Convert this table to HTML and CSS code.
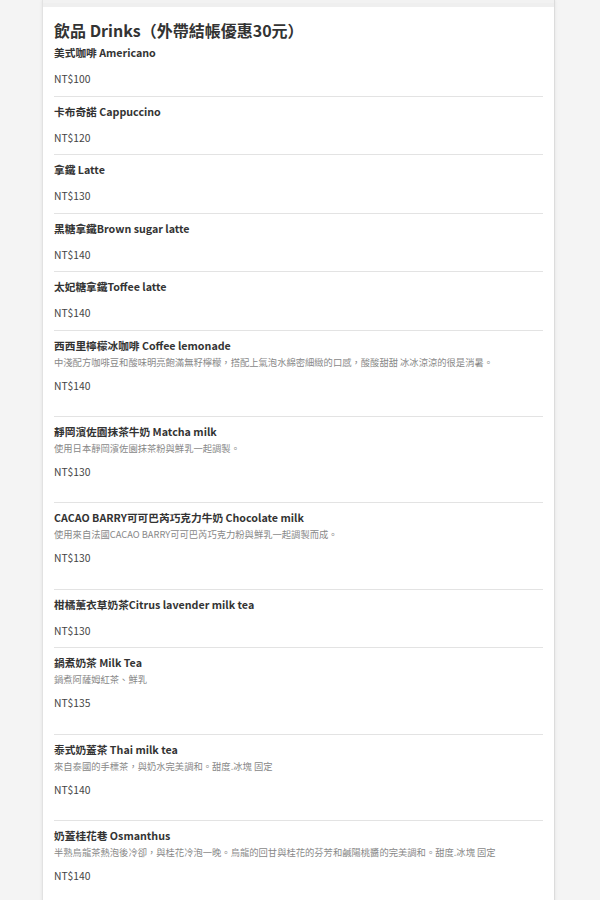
FILE: index.html
```html
<!DOCTYPE html>
<html lang="zh-Hant">
<head>
    <meta charset="UTF-8">
    <meta name="viewport" content="width=device-width, initial-scale=1.0">
    <title>飲品 Drinks</title>
    <link rel="stylesheet" href="styles.css">
</head>
<body>
    <div class="menu">
        <div class="menu-top"></div>
        <div class="section">
            <h2 class="section-title">飲品 Drinks（外帶結帳優惠30元）</h2>
            <div class="item">
                <div class="name">美式咖啡 Americano</div>
                <div class="price">NT$100</div>
            </div>
            <div class="item">
                <div class="name">卡布奇諾 Cappuccino</div>
                <div class="price">NT$120</div>
            </div>
            <div class="item">
                <div class="name">拿鐵 Latte</div>
                <div class="price">NT$130</div>
            </div>
            <div class="item">
                <div class="name">黑糖拿鐵Brown sugar latte</div>
                <div class="price">NT$140</div>
            </div>
            <div class="item">
                <div class="name">太妃糖拿鐵Toffee latte</div>
                <div class="price">NT$140</div>
            </div>
            <div class="item has-desc">
                <div class="name">西西里檸檬冰咖啡 Coffee lemonade</div>
                <div class="desc">中淺配方咖啡豆和酸味明亮飽滿無籽檸檬，搭配上氣泡水綿密細緻的口感，酸酸甜甜 冰冰涼涼的很是消暑。</div>
                <div class="price">NT$140</div>
            </div>
            <div class="item has-desc">
                <div class="name">靜岡濱佐園抹茶牛奶 Matcha milk</div>
                <div class="desc">使用日本靜岡濱佐園抹茶粉與鮮乳一起調製。</div>
                <div class="price">NT$130</div>
            </div>
            <div class="item has-desc">
                <div class="name">CACAO BARRY可可巴芮巧克力牛奶 Chocolate milk</div>
                <div class="desc">使用來自法國CACAO BARRY可可巴芮巧克力粉與鮮乳一起調製而成。</div>
                <div class="price">NT$130</div>
            </div>
            <div class="item">
                <div class="name">柑橘薰衣草奶茶Citrus lavender milk tea</div>
                <div class="price">NT$130</div>
            </div>
            <div class="item has-desc">
                <div class="name">鍋煮奶茶 Milk Tea</div>
                <div class="desc">鍋煮阿薩姆紅茶、鮮乳</div>
                <div class="price">NT$135</div>
            </div>
            <div class="item has-desc">
                <div class="name">泰式奶蓋茶 Thai milk tea</div>
                <div class="desc">來自泰國的手標茶，與奶水完美調和。甜度.冰塊 固定</div>
                <div class="price">NT$140</div>
            </div>
            <div class="item has-desc">
                <div class="name">奶蓋桂花巷 Osmanthus</div>
                <div class="desc">半熟烏龍茶熱泡後冷卻，與桂花冷泡一晚。烏龍的回甘與桂花的芬芳和鹹陽桃醬的完美調和。甜度.冰塊 固定</div>
                <div class="price">NT$140</div>
            </div>
        </div>
    </div>
</body>
</html>
```

FILE: styles.css
```css
body {
    font-family: "Noto Sans CJK TC", "Noto Sans", sans-serif;
    background-color: #f4f4f4;
    color: #333;
    margin: 0;
    overflow: hidden;
}
.menu {
    width: 511px;
    margin-left: 42px;
    background: #fff;
    border-left: 1px solid #e2e2e2;
    border-right: 1px solid #dcdcdc;
    box-shadow: 0 0 3px rgba(0, 0, 0, 0.08);
    min-height: 100vh;
}
.menu-top {
    height: 4px;
    border-top: 3px solid #f2f2f2;
    background: #efefef;
}
.section {
    padding: 12px 11px 0;
}
.section-title {
    font-size: 16px;
    font-weight: 700;
    line-height: 22px;
    margin: 0 0 4px;
    color: #333;
}
.item {
    padding: 7px 0 8.5px;
    border-bottom: 1px solid #e3e3e3;
}
.item:first-of-type {
    padding-top: 0;
}
.item.has-desc {
    padding-bottom: 22.4px;
}
.name {
    font-size: 10.7px;
    font-weight: 700;
    line-height: 16px;
    color: #333;
}
.desc {
    font-size: 9.3px;
    line-height: 16px;
    color: #888;
}
.price {
    font-size: 10.3px;
    line-height: 16px;
    margin-top: 10px;
    color: #444;
}
.has-desc .price {
    margin-top: 8px;
}
```
